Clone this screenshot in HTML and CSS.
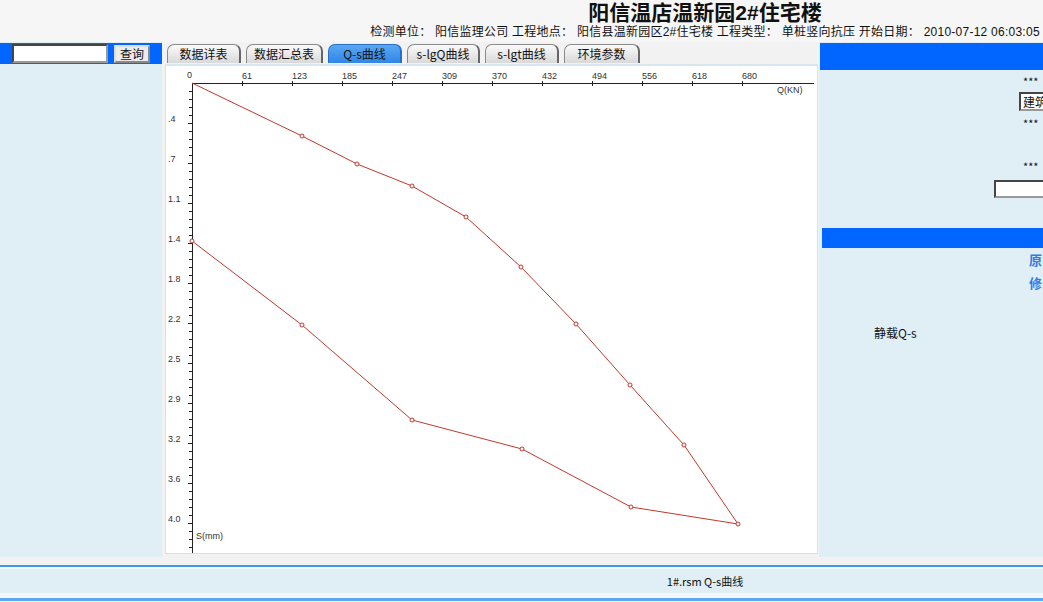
FILE: index.html
```html
<!DOCTYPE html>
<html lang="zh-CN">
<head>
<meta charset="utf-8">
<title>阳信温店温新园2#住宅楼</title>
<link rel="stylesheet" href="styles.css">
</head>
<body>
<div class="page">
  <header class="hdr">
    <h1 class="title">阳信温店温新园2#住宅楼</h1>
    <div class="meta">检测单位： 阳信监理公司 工程地点： 阳信县温新园区2#住宅楼 工程类型： 单桩竖向抗压 开始日期： 2010-07-12 06:03:05</div>
  </header>
  <main class="main">
    <aside class="left">
      <div class="search">
        <input class="search-input" type="text">
        <button class="search-btn" type="button">查询</button>
      </div>
    </aside>
    <section class="center">
      <nav class="tabs">
        <span class="tab w74">数据详表</span>
        <span class="tab w77">数据汇总表</span>
        <span class="tab w74 active">Q-s曲线</span>
        <span class="tab w73">s-lgQ曲线</span>
        <span class="tab w74">s-lgt曲线</span>
        <span class="tab w76">环境参数</span>
      </nav>
      <div class="chart">
        <svg class="plot" width="651" height="488" viewBox="0 0 651 488" xmlns="http://www.w3.org/2000/svg">
          <g class="axis" stroke="#222" stroke-width="1" shape-rendering="crispEdges">
            <line x1="26" y1="17.5" x2="648" y2="17.5"/>
            <line x1="26.5" y1="17" x2="26.5" y2="488"/>
            <g id="xticks"></g>
            <g id="yticks"></g>
          </g>
          <g class="labels" font-family="Liberation Sans, Arial, sans-serif" font-size="9" fill="#333">
            <text x="21" y="12">0</text>
            <text x="76" y="13">61</text>
            <text x="126" y="13">123</text>
            <text x="176" y="13">185</text>
            <text x="226" y="13">247</text>
            <text x="276" y="13">309</text>
            <text x="326" y="13">370</text>
            <text x="376" y="13">432</text>
            <text x="426" y="13">494</text>
            <text x="476" y="13">556</text>
            <text x="526" y="13">618</text>
            <text x="576" y="13">680</text>
            <text x="611" y="27">Q(KN)</text>
            <text x="2" y="55.5">.4</text>
            <text x="2" y="95.5">.7</text>
            <text x="2" y="135.5">1.1</text>
            <text x="2" y="175.5">1.4</text>
            <text x="2" y="215.5">1.8</text>
            <text x="2" y="255.5">2.2</text>
            <text x="2" y="295.5">2.5</text>
            <text x="2" y="335.5">2.9</text>
            <text x="2" y="375.5">3.2</text>
            <text x="2" y="415.5">3.6</text>
            <text x="2" y="455.5">4.0</text>
            <text x="30" y="473">S(mm)</text>
          </g>
          <g fill="none" stroke="#c0392b" stroke-width="1">
            <polyline points="26,17 136,70 191,98 246,120 300,151 355,201 410,258 464,319 518,379 572,458"/>
            <polyline points="572,458 465,441 356,383 246,354 136,259 26,175"/>
          </g>
          <g fill="#fff" stroke="#c0392b" stroke-width="1">
            <circle cx="136" cy="70" r="2"/>
            <circle cx="191" cy="98" r="2"/>
            <circle cx="246" cy="120" r="2"/>
            <circle cx="300" cy="151" r="2"/>
            <circle cx="355" cy="201" r="2"/>
            <circle cx="410" cy="258" r="2"/>
            <circle cx="464" cy="319" r="2"/>
            <circle cx="518" cy="379" r="2"/>
            <circle cx="572" cy="458" r="2"/>
            <circle cx="465" cy="441" r="2"/>
            <circle cx="356" cy="383" r="2"/>
            <circle cx="246" cy="354" r="2"/>
            <circle cx="136" cy="259" r="2"/>
            <circle cx="26" cy="175" r="2"/>
          </g>
        </svg>
      </div>
    </section>
    <aside class="right">
      <div class="bar bar-top"></div>
      <div class="row r1">***</div>
      <div class="row r2"><select class="sel"><option>建筑工程</option></select></div>
      <div class="row r3">***</div>
      <div class="row r4">***</div>
      <div class="row r5"><input class="rinput" type="text"></div>
      <div class="bar bar-mid"></div>
      <div class="row link l1">原</div>
      <div class="row link l2">修</div>
      <div class="row caption">静载Q-s</div>
    </aside>
  </main>
  <footer class="status">
    <div class="status-band">1#.rsm Q-s曲线</div>
  </footer>
</div>
<script>
(function(){
  var ns="http://www.w3.org/2000/svg";
  var xt=document.getElementById("xticks");
  for(var i=1;i<=11;i++){
    var x=26+50*i+0.5;
    var l=document.createElementNS(ns,"line");
    l.setAttribute("x1",x);l.setAttribute("x2",x);
    l.setAttribute("y1",15);l.setAttribute("y2",20);
    xt.appendChild(l);
  }
  var yt=document.getElementById("yticks");
  for(var k=1;k<=58;k++){
    var y=17+8*k+0.5;
    var m=document.createElementNS(ns,"line");
    m.setAttribute("x1",k%5===0?22:23);m.setAttribute("x2",26);
    m.setAttribute("y1",y);m.setAttribute("y2",y);
    yt.appendChild(m);
  }
})();
</script>
</body>
</html>
```
FILE: styles.css
```css
html, body {
  margin: 0;
  padding: 0;
  overflow: hidden;
  background: #f2f2f2;
}
body {
  font-family: "Noto Sans CJK SC", "DejaVu Sans", sans-serif;
  font-size: 12px;
  color: #111;
}
.page {
  width: 1410px;
  height: 602px;
  background: #f2f2f2;
}
.hdr {
  height: 42px;
  background: #f6f6f6;
  text-align: center;
  font-family: "Liberation Sans", "Noto Sans CJK SC", sans-serif;
}
.title {
  margin: 0;
  padding-top: 1px;
  font-size: 21px;
  line-height: 23px;
  height: 23px;
  font-weight: bold;
  color: #111;
  white-space: nowrap;
}
.meta {
  margin-top: 1px;
  font-size: 12px;
  line-height: 15px;
  height: 15px;
  letter-spacing: 0.25px;
  color: #111;
  white-space: nowrap;
}
.main {
  display: flex;
  height: 515px;
}
.left {
  width: 162px;
  background: #e0eef6;
}
.search {
  margin-top: 1px;
  height: 21px;
  background: #0066ff;
  display: flex;
  align-items: center;
  padding-left: 12px;
  gap: 6px;
}
.search-input {
  box-sizing: border-box;
  width: 96px;
  height: 19px;
  margin: 0;
  border: 2px inset #999;
  background: #fff;
}
.search-btn {
  box-sizing: border-box;
  width: 36px;
  height: 18px;
  margin: 0;
  padding: 0;
  font-family: inherit;
  font-size: 12px;
  line-height: 14px;
  background: #ececec;
  border: 2px outset #ddd;
  color: #111;
}
.center {
  width: 653px;
  margin-left: 3px;
  display: flex;
  flex-direction: column;
}
.tabs {
  height: 22px;
  padding: 2px 0 0 2px;
  box-sizing: border-box;
  display: flex;
  gap: 5px;
  background: #f2f2f2;
}
.tab {
  box-sizing: border-box;
  height: 19px;
  border: 1px solid #8a8a8a;
  border-right: 2px solid #666;
  border-bottom: none;
  border-radius: 7px 7px 0 0;
  background: linear-gradient(#fafafa, #d9d9d9);
  text-align: center;
  line-height: 18px;
  font-size: 12px;
  color: #111;
}
.tab.active {
  background: linear-gradient(#5aa8f4, #2f86e6);
  border-color: #2a6fc6;
}
.w74 { width: 74px; }
.w77 { width: 77px; }
.w73 { width: 73px; }
.w76 { width: 76px; }
.chart {
  height: 490px;
  box-sizing: border-box;
  background: #fff;
  border: 1px solid #cfe2ee;
  border-top: 2px solid #d6e7f2;
  overflow: hidden;
}
.plot {
  display: block;
}
.right {
  flex: 1;
  background: #e0eef6;
  border-left: 1px solid #eef5f9;
}
.bar {
  background: #0066ff;
}
.bar-top {
  margin: 1px 0 0 1px;
  height: 27px;
}
.row {
  height: 14px;
  line-height: 14px;
  font-size: 12px;
}
.r1 { margin: 4px 0 0 204px; font-size: 11px; }
.r2 { margin: 4px 0 0 200px; height: 18px; }
.sel {
  box-sizing: border-box;
  height: 19px;
  width: 80px;
  margin: 0;
  font-family: inherit;
  font-size: 12px;
  line-height: 15px;
  border: 2px inset #999;
  background: #fff;
  padding: 0 2px;
  color: #111;
  -webkit-appearance: none;
  appearance: none;
}
.r3 { margin: 6px 0 0 204px; font-size: 11px; }
.r4 { margin: 29px 0 0 204px; font-size: 11px; }
.r5 { margin: 7px 0 0 175px; height: 17px; }
.rinput {
  box-sizing: border-box;
  width: 90px;
  height: 18px;
  margin: 0;
  border: 2px inset #999;
  background: #fff;
}
.bar-mid {
  margin: 31px 0 0 3px;
  height: 20px;
}
.link {
  color: #2f7be8;
  font-size: 13px;
  font-weight: bold;
  margin-left: 210px;
}
.l1 { margin-top: 5px; }
.l2 { margin-top: 9px; }
.caption {
  margin: 36px 0 0 55px;
  color: #111;
}
.status {
  margin-top: 8px;
  border-top: 2px solid #3a96ee;
  border-bottom: 3px solid #5aa8f0;
  background: #f4f8fb;
  padding-top: 2px;
  padding-bottom: 5px;
}
.status-band {
  height: 24px;
  line-height: 24px;
  background: #e0eef6;
  text-align: center;
  font-size: 11px;
  color: #111;
}
```
